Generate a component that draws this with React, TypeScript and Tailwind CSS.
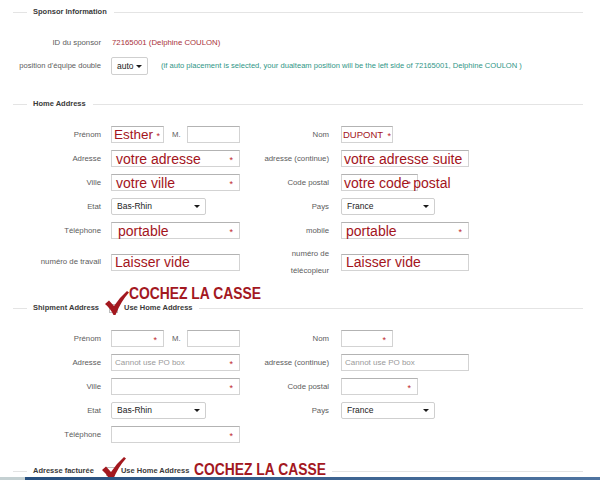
import React from "react";

// Small pieces
function Star({ pos = "right-[6px]" }: { pos?: string }) {
  return <span className={`absolute top-[5px] text-[9px] leading-none text-[#c0282e] ${pos}`}>*</span>;
}

interface BoxProps {
  width: string;
  star?: boolean;
  starPos?: string;
  children?: React.ReactNode;
}

function Box({ width, star, starPos, children }: BoxProps) {
  return (
    <div className={`relative h-[17px] shrink-0 flex items-center whitespace-nowrap bg-white border border-[#d3d3d3] border-t-[#b3b3b3] ${width}`}>
      {children}
      {star && <Star pos={starPos} />}
    </div>
  );
}

function Big({ children, pl = "pl-[3px]" }: { children: React.ReactNode; pl?: string }) {
  return <span className={`${pl} text-[14px] leading-none text-[#a3141c]`}>{children}</span>;
}

function Hint({ children }: { children: React.ReactNode }) {
  return <span className="pl-[3px] text-[8px] leading-none text-[#9a9a9a]">{children}</span>;
}

function Select({ width, value, h = "h-[17px]" }: { width: string; value: string; h?: string }) {
  return (
    <div className={`shrink-0 flex items-center justify-between pl-[5px] pr-[5px] bg-white border border-[#cfcfcf] rounded-[2px] ${h} ${width}`}>
      <span className="text-[8.5px] leading-none text-[#222]">{value}</span>
      <span className="w-0 h-0 border-l-[3px] border-r-[3px] border-t-[3.5px] border-l-transparent border-r-transparent border-t-[#1a1a1a]" />
    </div>
  );
}

function Check({ top }: { top: string }) {
  return (
    <svg viewBox="0 0 24 24" className={`absolute left-[-5px] w-[24px] h-[24px] ${top}`}>
      <path d="M0 13 L4 9.5 L9 15 Q15 6 22 0 L24 1.5 Q16 10 10.5 24 L8.5 24 Q5 17 0 13 Z" fill="#a3181f" />
    </svg>
  );
}

interface RowProps {
  label: React.ReactNode;
  left?: React.ReactNode;
  rightLabel?: React.ReactNode;
  right?: React.ReactNode;
  h?: string;
}

function Row({ label, left, rightLabel, right, h = "h-[17px]" }: RowProps) {
  return (
    <div className={`flex items-center ${h}`}>
      <div className="w-[101px] text-right text-[7.8px] text-[#5c5c5c]">{label}</div>
      <div className="ml-[10px] w-[130px] flex items-center">{left}</div>
      <div className="w-[88px] text-right text-[7.8px] leading-[17px] text-[#5c5c5c]">{rightLabel}</div>
      <div className="ml-[12px] flex items-center">{right}</div>
    </div>
  );
}

function Heading({ title, extra, className = "" }: { title: string; extra?: React.ReactNode; className?: string }) {
  return (
    <div className={`flex items-center h-[10px] pl-[13px] pr-[17px] ${className}`}>
      <div className="w-[14px] h-px bg-[#e4e4e4]" />
      <span className="ml-[6px] text-[7.5px] font-bold text-[#3a3a3a] whitespace-nowrap">{title}</span>
      {extra}
      <div className="ml-[7px] flex-1 h-px bg-[#e4e4e4]" />
    </div>
  );
}

function UseHome({ ml, top }: { ml: string; top: string }) {
  return (
    <>
      <span className={`relative w-[9px] h-[9px] shrink-0 border border-[#bdbdbd] bg-white ${ml}`}>
        <Check top={top} />
      </span>
      <span className="ml-[6px] text-[7.5px] font-bold text-[#3a3a3a] whitespace-nowrap">Use Home Address</span>
    </>
  );
}

function NameRow({ empty }: { empty: boolean }) {
  return (
    <Row
      label="Prénom"
      left={
        <>
          <Box width="w-[53px]" star starPos={empty ? "right-[6px]" : "right-[3px]"}>
            {!empty && <span className="pl-[2px] text-[13.5px] leading-none text-[#a3141c]">Esther</span>}
          </Box>
          <span className="ml-[8px] w-[15px] text-[7.8px] text-[#5c5c5c]">M.</span>
          <Box width="w-[53px]" />
        </>
      }
      rightLabel="Nom"
      right={
        <Box width="w-[52px]" star starPos={empty ? "right-[6px]" : "right-[1px]"}>
          {!empty && <span className="pl-[1px] text-[9.5px] leading-none text-[#a3141c]">DUPONT</span>}
        </Box>
      }
    />
  );
}

export default function App() {
  return (
    <div className="relative w-[600px] h-[480px] overflow-hidden bg-white font-['Liberation_Sans',Arial,sans-serif]">
      {/* Sponsor Information */}
      <Heading title="Sponsor Information" className="mt-[7px]" />
      <div className="mt-[20px] flex items-center h-[12px]">
        <div className="w-[101px] text-right text-[7.8px] text-[#5c5c5c]">ID du sponsor</div>
        <span className="ml-[11px] text-[7.8px] text-[#a8323a] whitespace-nowrap">72165001 (Delphine COULON)</span>
      </div>
      <div className="mt-[8px] flex items-center h-[18px]">
        <div className="w-[101px] text-right text-[7.6px] text-[#5c5c5c] whitespace-nowrap">position d'équipe double</div>
        <div className="ml-[10px]">
          <Select width="w-[37px]" value="auto" h="h-[18px]" />
        </div>
        <span className="ml-[13px] text-[7.6px] text-[#2f9686] whitespace-nowrap">
          (if auto placement is selected, your dualteam position will be the left side of 72165001, Delphine COULON )
        </span>
      </div>

      {/* Home Address */}
      <Heading title="Home Address" className="mt-[24px]" />
      <div className="mt-[17px] flex flex-col gap-[7px]">
        <NameRow empty={false} />
        <Row
          label="Adresse"
          left={<Box width="w-[129px]" star><Big pl="pl-[4px]">votre adresse</Big></Box>}
          rightLabel="adresse (continue)"
          right={<Box width="w-[128px]"><Big pl="pl-[2px]">votre adresse suite</Big></Box>}
        />
        <Row
          label="Ville"
          left={<Box width="w-[129px]" star><Big pl="pl-[4px]">votre ville</Big></Box>}
          rightLabel="Code postal"
          right={<Box width="w-[77px]" star><Big pl="pl-[2px]">votre code postal</Big></Box>}
        />
        <Row
          label="Etat"
          left={<Select width="w-[95px]" value="Bas-Rhin" />}
          rightLabel="Pays"
          right={<Select width="w-[94px]" value="France" />}
        />
        <Row
          label="Téléphone"
          left={<Box width="w-[129px]" star><Big pl="pl-[6px]">portable</Big></Box>}
          rightLabel="mobile"
          right={<Box width="w-[128px]" star><Big pl="pl-[4px]">portable</Big></Box>}
        />
      </div>
      <div className="mt-[8px]">
        <Row
          h="h-[30px]"
          label="numéro de travail"
          left={<Box width="w-[129px]"><Big pl="pl-[3px]">Laisser vide</Big></Box>}
          rightLabel={<>numéro de<br />télécopieur</>}
          right={<Box width="w-[128px]"><Big pl="pl-[4px]">Laisser vide</Big></Box>}
        />
      </div>

      {/* Shipment Address */}
      <Heading title="Shipment Address" className="mt-[26px]" extra={<UseHome ml="ml-[10px]" top="top-[-14px]" />} />
      <div className="mt-[17px] flex flex-col gap-[7px]">
        <NameRow empty />
        <Row
          label="Adresse"
          left={<Box width="w-[129px]" star><Hint>Cannot use PO box</Hint></Box>}
          rightLabel="adresse (continue)"
          right={<Box width="w-[128px]"><Hint>Cannot use PO box</Hint></Box>}
        />
        <Row
          label="Ville"
          left={<Box width="w-[129px]" star />}
          rightLabel="Code postal"
          right={<Box width="w-[77px]" star />}
        />
        <Row
          label="Etat"
          left={<Select width="w-[95px]" value="Bas-Rhin" />}
          rightLabel="Pays"
          right={<Select width="w-[94px]" value="France" />}
        />
        <Row label="Téléphone" left={<Box width="w-[129px]" star />} />
      </div>

      {/* Adresse facturée */}
      <Heading
        title="Adresse facturée"
        className="mt-[23px]"
        extra={
          <>
            <UseHome ml="ml-[12px]" top="top-[-11px]" />
            <span className="ml-[5px] mr-[-26px] text-[16.5px] font-bold leading-none text-[#a3181f] whitespace-nowrap origin-left scale-x-[0.84] -translate-y-[2px]">
              COCHEZ LA CASSE
            </span>
          </>
        }
      />

      {/* annotation over the shipment heading */}
      <span className="absolute left-[129px] top-[285px] text-[16.5px] font-bold leading-none text-[#a3181f] whitespace-nowrap origin-left scale-x-[0.84]">
        COCHEZ LA CASSE
      </span>

      {/* taskbar edge */}
      <div className="absolute bottom-0 left-0 right-0 h-[3px] flex">
        <div className="w-[25px] bg-[#c4d0d2]" />
        <div className="flex-1 bg-linear-to-r from-[#27507f] to-[#4f74a0]" />
      </div>
    </div>
  );
}
